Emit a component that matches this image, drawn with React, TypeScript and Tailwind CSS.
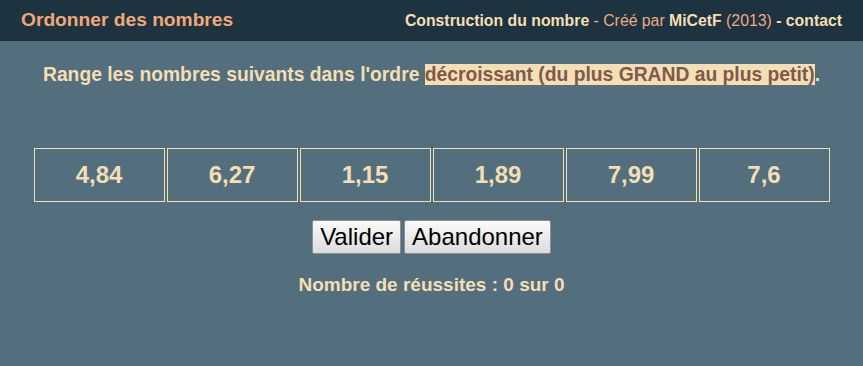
const numbers = ["4,84", "6,27", "1,15", "1,89", "7,99", "7,6"];

export default function App() {
  return (
    <div className="w-[863px] h-[366px] bg-[#536e7c] font-['Liberation_Sans',Arial,sans-serif] overflow-hidden">
      <header className="h-[41px] bg-[#1d3340] flex items-center justify-between px-[21px]">
        <h1 className="text-[19.2px] font-bold text-[#f4a679]">Ordonner des nombres</h1>
        <div className="text-[15.8px] text-[#f5deb3]">
          <span className="font-bold">Construction du nombre</span>
          <span className="text-[#f0a982]"> - Créé par </span>
          <span className="font-bold">MiCetF</span>
          <span className="text-[#f0a982]"> (2013) </span>
          <span className="font-bold">- contact</span>
        </div>
      </header>

      <main className="flex flex-col items-center">
        <p className="mt-[20px] text-[19.3px] font-bold text-[#f5deb3]">
          Range les nombres suivants dans l'ordre{" "}
          <span className="bg-[#f5deb3] text-[#7d5a4c]">décroissant (du plus GRAND au plus petit)</span>.
        </p>

        <div className="mt-[58px] flex gap-[2px]">
          {numbers.map((n) => (
            <div
              key={n}
              className="w-[131px] h-[54px] border border-[#f5deb3] flex items-center justify-center text-[24px] font-bold text-[#f5deb3]"
            >
              {n}
            </div>
          ))}
        </div>

        <div className="mt-[18px] flex gap-[3px]">
          <button className="h-[34px] px-[7px] text-[24px] leading-none text-black bg-gradient-to-b from-[#fafafa] to-[#dcdcdc] border border-[#8e8e8e] rounded-[2px]">
            Valider
          </button>
          <button className="h-[34px] px-[7px] text-[24px] leading-none text-black bg-gradient-to-b from-[#fafafa] to-[#dcdcdc] border border-[#8e8e8e] rounded-[2px]">
            Abandonner
          </button>
        </div>

        <p className="mt-[17px] text-[19px] font-bold text-[#f5deb3]">Nombre de réussites : 0 sur 0</p>
      </main>
    </div>
  );
}
